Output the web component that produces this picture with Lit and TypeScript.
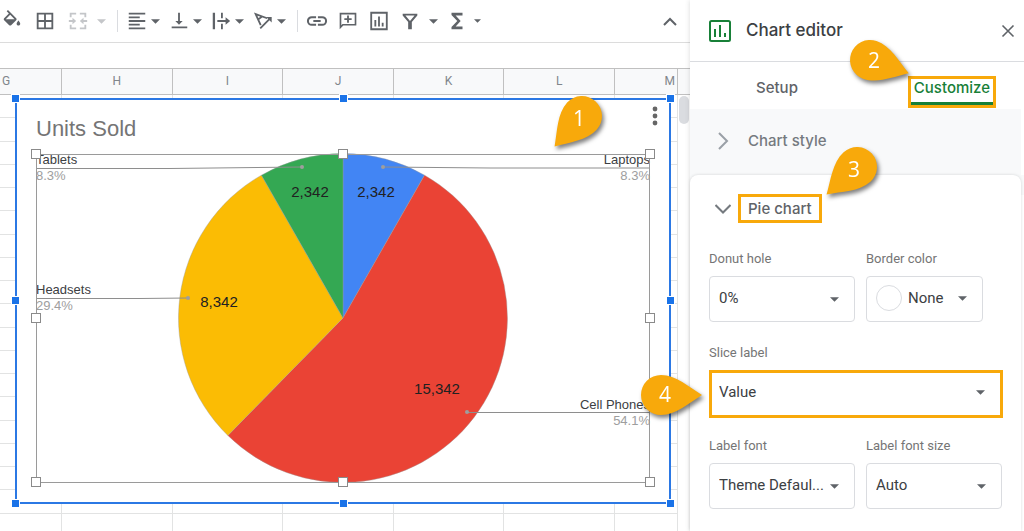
import { LitElement, html, css, svg } from "lit";
import { customElement, property, state } from "lit/decorators.js";
import { classMap } from "lit/directives/class-map.js";

const CARET = svg`<path d="M0 0h10L5 5z" fill="currentColor"/>`;

@customElement("callout-pin")
class CalloutPin extends LitElement {
  @property({ type: Number }) angle = 0;
  @property() label = "";

  static styles = css`
    :host {
      display: block;
      pointer-events: none;
    }
    .pin {
      display: block;
      overflow: visible;
      filter: drop-shadow(2px 3px 2px rgba(0, 0, 0, 0.5));
    }
    .number {
      font: 500 21px "Open Sans", sans-serif;
      fill: #fff;
      text-anchor: middle;
    }
  `;

  render() {
    const rad = (this.angle * Math.PI) / 180;
    return html`<svg class="pin" width="82" height="82" viewBox="-41 -41 82 82">
      <path
        transform="rotate(${this.angle})"
        fill="#f8a90b"
        d="M41 0C28-8 15-20 0-20A20 20 0 0 0 0 20C15 20 28 8 41 0z"
      />
      <text class="number" x=${Math.round(Math.cos(rad) * 4)} y=${Math.round(Math.sin(rad) * 4) + 7}>
        ${this.label}
      </text>
    </svg>`;
  }
}

@customElement("sheet-toolbar")
class SheetToolbar extends LitElement {
  static styles = css`
    :host {
      display: flex;
      align-items: center;
      height: 42px;
      padding: 0 9px 0 1px;
      border-bottom: 1px solid #dcdcdc;
      color: #5f6368;
      background: #fff;
    }
    button {
      display: flex;
      align-items: center;
      justify-content: center;
      flex: none;
      width: 22px;
      height: 28px;
      padding: 0;
      border: 0;
      background: none;
      color: inherit;
    }
    .caret {
      width: 12px;
    }
    .group {
      display: flex;
      gap: 11px;
    }
    .menus {
      gap: 7px;
    }
    .insert {
      gap: 9px;
    }
    .pair {
      display: flex;
      gap: 1px;
    }
    .wide {
      gap: 6px;
    }
    .functions {
      display: flex;
      gap: 3px;
      margin-left: 7px;
    }
    .off {
      color: #c4c6c9;
    }
    .rule {
      width: 1px;
      height: 22px;
      margin: 0 8px 0 10px;
      background: #dadce0;
    }
    .collapse {
      margin-left: auto;
    }
  `;

  tool(name: string, glyph: unknown) {
    return html`<button aria-label=${name}>
      <svg width="22" height="22" viewBox="0 0 24 24" fill="currentColor">${glyph}</svg>
    </button>`;
  }

  caret(name: string, small = false) {
    return html`<button class="caret" aria-label=${name}>
      <svg width=${small ? 7 : 9} height=${small ? 4 : 5} viewBox="0 0 10 5">${CARET}</svg>
    </button>`;
  }

  render() {
    return html`
      <div class="group">
        ${this.tool("Fill color", svg`<path d="M16.56 8.94L7.62 0 6.21 1.41l2.38 2.38-5.15 5.15c-.59.59-.59 1.54 0 2.12l5.5 5.5c.29.29.68.44 1.06.44s.77-.15 1.06-.44l5.5-5.5c.59-.58.59-1.53 0-2.12zM5.21 10L10 5.21 14.79 10zM19 11.5s-2 2.17-2 3.5c0 1.1.9 2 2 2s2-.9 2-2c0-1.33-2-3.5-2-3.5z"/>`)}
        ${this.tool("Borders", svg`<path d="M3 3v18h18V3H3zm8 16H5v-6h6v6zm0-8H5V5h6v6zm8 8h-6v-6h6v6zm0-8h-6V5h6v6z"/>`)}
        <div class="pair wide off">
          ${this.tool("Merge cells", svg`<path d="M3 3h7v2H5v3H3zM14 3h7v5h-2V5h-5zM3 16h2v3h5v2H3zM19 16h2v5h-7v-2h5zM2 11h4V8.500l4 3.500-4 3.500V13H2zM22 11h-4V8.500L14 12l4 3.500V13h4z"/>`)}
          ${this.caret("Merge options")}
        </div>
      </div>
      <span class="rule"></span>
      <div class="group menus">
        <div class="pair">
          ${this.tool("Horizontal align", svg`<path d="M3 3h18v2H3zM3 7h12v2H3zM3 11h18v2H3zM3 15h12v2H3zM3 19h18v2H3z"/>`)}
          ${this.caret("Horizontal align options")}
        </div>
        <div class="pair">
          ${this.tool("Vertical align", svg`<path d="M16 12h-3V3h-2v9H8l4 4zM4 18v2h17v-2z"/>`)}
          ${this.caret("Vertical align options")}
        </div>
        <div class="pair">
          ${this.tool("Text wrapping", svg`<path d="M3 3h2.500v18H3zM12 3h2v6h-2zM12 15h2v6h-2zM8 11h9V8l5 4-5 4v-3H8z"/>`)}
          ${this.caret("Wrapping options")}
        </div>
        <div class="pair">
          ${this.tool("Text rotation", svg`<path d="M9.500 16.500L4 4.500L16.500 9M6.500 10.500L11 7M9 20L19 10" fill="none" stroke="currentColor" stroke-width="2"/><path d="M15.500 7.500H21.500V13.500z"/>`)}
          ${this.caret("Rotation options")}
        </div>
      </div>
      <span class="rule"></span>
      <div class="group insert">
        ${this.tool("Insert link", svg`<path d="M3.200 12c0-1.710 1.390-3.100 3.100-3.100H11V6.700H6.300a5.300 5.300 0 0 0 0 10.600H11v-2.200H6.300A3.100 3.100 0 0 1 3.200 12zM8 13h8v-2H8zm9.700-6.300H13v2.200h4.700a3.100 3.100 0 0 1 0 6.200H13v2.200h4.700a5.300 5.300 0 0 0 0-10.600z"/>`)}
        ${this.tool("Insert comment", svg`<path d="M20.500 3h-17C2.700 3 2.900 3 2.900 4v17l4-4h13.600c.6 0 .6 0 .6-1V4c0-1 0-1-.6-1zM19.300 15.200H6l-1.300 1.300V4.800h14.600zM11 14h2v-3h3V9h-3V6h-2v3H8v2h3z"/>`)}
        ${this.tool("Insert chart", svg`<path d="M2.500 2v20h19V2zm17 18h-15V4h15zM7 11h2v7H7zM11 7h2v11h-2zM15 14h2v4h-2z"/>`)}
        <div class="pair wide">
          ${this.tool("Create a filter", svg`<path d="M4 4h16v2l-6 7v8h-4v-8L4 6zm3 2l5 6 5-6z" fill-rule="evenodd"/>`)}
          ${this.caret("Filter views")}
        </div>
      </div>
      <div class="functions">
        ${this.tool("Functions", svg`<path d="M18 3H6v2.500l6.300 6.500L6 18.500V21h12v-3h-7.500l5.500-6-5.500-6H18z"/>`)}
        ${this.caret("Function list", true)}
      </div>
      <button class="collapse" aria-label="Hide the menus">
        <svg width="14" height="9" viewBox="0 0 14 9"><path d="M1 8l6-6 6 6" fill="none" stroke="currentColor" stroke-width="2"/></svg>
      </button>
    `;
  }
}

interface Slice {
  name: string;
  value: number;
  color: string;
  valueAt: [number, number];
  leader: string;
  dot: [number, number];
  side: "left" | "right";
  labelY: number;
}

const SLICES: Slice[] = [
  { name: "Laptops", value: 2342, color: "#4285f4", valueAt: [376, 197], leader: "M383 167L490 168H650", dot: [383, 167], side: "right", labelY: 164 },
  { name: "Cell Phones", value: 15342, color: "#ea4335", valueAt: [437, 394], leader: "M467 412.500H650", dot: [467, 412], side: "right", labelY: 409 },
  { name: "Headsets", value: 8342, color: "#fbbc04", valueAt: [219, 307], leader: "M36 298.500L140 298.500L188 298", dot: [188, 298], side: "left", labelY: 294 },
  { name: "Tablets", value: 2342, color: "#34a853", valueAt: [310, 197], leader: "M36 168.500H170L302 167", dot: [302, 167], side: "left", labelY: 164 },
];

@customElement("units-chart")
class UnitsChart extends LitElement {
  static styles = css`
    :host {
      display: block;
      font-family: "Liberation Sans", Arial, sans-serif;
    }
    .chart {
      display: block;
      width: 100%;
    }
    .title {
      font-size: 22px;
      fill: #757575;
    }
    .value {
      font-size: 15px;
      fill: #212121;
      text-anchor: middle;
    }
    .name {
      font-size: 13px;
      fill: #3c4043;
    }
    .share {
      font-size: 13px;
      fill: #9e9e9e;
    }
    .right {
      text-anchor: end;
    }
    .leader {
      fill: none;
      stroke: #8e8e8e;
    }
    .dot {
      fill: #9e9e9e;
    }
    .frame {
      fill: #fff;
      stroke: #2b78e4;
      stroke-width: 2;
    }
    .plot {
      fill: none;
      stroke: #9a9a9a;
    }
    .grip {
      fill: #1a73e8;
      stroke: #fff;
    }
    .plot-grip {
      fill: #fff;
      stroke: #8a8a8a;
    }
  `;

  render() {
    const total = SLICES.reduce((sum, s) => sum + s.value, 0);
    const cx = 343;
    const cy = 318;
    const r = 164.5;
    let turn = 0;
    const wedges = SLICES.map((s) => {
      const from = turn * 2 * Math.PI;
      turn += s.value / total;
      const to = turn * 2 * Math.PI;
      const at = (a: number) => `${cx + r * Math.sin(a)} ${cy - r * Math.cos(a)}`;
      return svg`<path fill=${s.color} stroke="#999" stroke-width="0.4"
        d="M${cx} ${cy}L${at(from)}A${r} ${r} 0 ${to - from > Math.PI ? 1 : 0} 1 ${at(to)}z"/>`;
    });
    const grip = (cls: string, half: number) => ([x, y]: number[]) =>
      svg`<rect class=${cls} x=${x - half} y=${y - half} width=${half * 2} height=${half * 2}/>`;

    return html`<svg class="chart" viewBox="8 91 670 420" role="img" aria-label="Units Sold pie chart">
      <rect class="frame" x="16" y="99" width="654" height="404" />
      <text class="title" x="36" y="136">Units Sold</text>
      ${wedges}
      ${SLICES.map((s) => {
        const x = s.side === "left" ? 36 : 650;
        const end = s.side === "right" ? " right" : "";
        return svg`
          <path class="leader" d=${s.leader}/>
          <circle class="dot" cx=${s.dot[0]} cy=${s.dot[1]} r="2"/>
          <text class="value" x=${s.valueAt[0]} y=${s.valueAt[1]}>${s.value.toLocaleString("en-US")}</text>
          <text class=${"name" + end} x=${x} y=${s.labelY}>${s.name}</text>
          <text class=${"share" + end} x=${x} y=${s.labelY + 16}>${((s.value / total) * 100).toFixed(1)}%</text>`;
      })}
      <rect class="plot" x="36.500" y="154.500" width="613" height="328" />
      ${[[36, 154], [343, 154], [650, 154], [36, 318], [650, 318], [36, 482], [343, 482], [650, 482]].map(grip("plot-grip", 4.5))}
      ${[[15, 98], [343, 98], [670, 98], [15, 300], [670, 300], [15, 503], [343, 503], [670, 503]].map(([x, y]) => [x + 0.5, y + 0.5]).map(grip("grip", 4))}
    </svg>`;
  }
}

@customElement("sheet-grid")
class SheetGrid extends LitElement {
  static styles = css`
    :host {
      display: flex;
      flex: 1;
      min-height: 0;
      position: relative;
      overflow: hidden;
      background: #fff;
    }
    .cells {
      flex: 1;
      width: 100%;
      min-width: 0;
      align-self: flex-start;
      table-layout: fixed;
      border-collapse: separate;
      border-spacing: 0;
      font: 12px Roboto, sans-serif;
    }
    .first {
      width: 62px;
    }
    .last {
      width: 63px;
    }
    th {
      box-sizing: border-box;
      height: 27px;
      padding: 0 0 1px;
      border: 1px solid #c0c0c0;
      border-left: 0;
      background: #f8f9fa;
      color: #80868b;
      font-weight: 400;
    }
    th.first {
      padding-left: 2px;
      text-align: left;
    }
    th.last {
      padding-right: 2px;
      text-align: right;
    }
    td {
      box-sizing: border-box;
      height: 23px;
      padding: 0;
      border: solid #e2e3e3;
      border-width: 0 1px 1px 0;
    }
    .tall td {
      height: 24px;
    }
    .scroll {
      flex: none;
      width: 12px;
    }
    .corner {
      box-sizing: border-box;
      height: 27px;
      border: solid #c0c0c0;
      border-width: 1px 0;
      background: #f8f9fa;
    }
    .thumb {
      height: 28px;
      margin: 1px;
      border-radius: 5px;
      background: #dadce0;
    }
    .overlay {
      position: absolute;
      left: 8px;
      right: 12px;
      top: 23px;
    }
    .more {
      position: absolute;
      right: 14px;
      top: 13px;
      width: 18px;
      height: 24px;
      padding: 0;
      border: 0;
      background: none;
      display: flex;
      align-items: center;
      justify-content: center;
    }
    .pin-one {
      position: absolute;
      right: 55px;
      top: -16px;
    }
  `;

  render() {
    const columns = ["G", "H", "I", "J", "K", "L", "M"];
    const edge = (i: number) => classMap({ first: i === 0, last: i === columns.length - 1 });
    return html`
      <table class="cells">
        <thead>
          <tr>${columns.map((c, i) => html`<th class=${edge(i)} scope="col">${c}</th>`)}</tr>
        </thead>
        <tbody>
          ${Array.from({ length: 19 }, (_, row) => html`<tr class=${row % 4 === 1 ? "tall" : ""}>${columns.map(() => html`<td></td>`)}</tr>`)}
        </tbody>
      </table>
      <div class="scroll"><div class="corner"></div><div class="thumb"></div></div>
      <div class="overlay">
        <units-chart></units-chart>
        <button class="more" aria-label="Chart options">
          <svg width="6" height="20" viewBox="0 0 6 20" fill="#666">
            <circle cx="3" cy="3" r="2.400"/><circle cx="3" cy="10" r="2.400"/><circle cx="3" cy="17" r="2.400"/>
          </svg>
        </button>
        <callout-pin class="pin-one" angle="132" label="1"></callout-pin>
      </div>
    `;
  }
}

@customElement("chart-editor")
class ChartEditor extends LitElement {
  @state() private tab = "Customize";

  static styles = css`
    :host {
      display: flex;
      flex-direction: column;
      position: relative;
      background: #fff;
      box-shadow: 0 0 5px rgba(60, 64, 67, 0.2);
      font-family: Roboto, sans-serif;
      color: #3c4043;
    }
    button {
      padding: 0;
      border: 0;
      background: none;
      font-family: inherit;
      color: inherit;
      text-align: left;
    }
    .head {
      display: flex;
      align-items: center;
      gap: 15px;
      height: 61px;
      padding: 0 9px 0 19px;
      border-bottom: 1px solid #dadce0;
    }
    .head h1 {
      margin: 0;
      padding-bottom: 2px;
      font: 500 17px Inter, sans-serif;
      color: #3c4043;
    }
    .close {
      display: flex;
      margin-left: auto;
    }
    .tabs {
      display: flex;
      justify-content: space-between;
      align-items: flex-end;
      height: 46px;
      padding: 0 28px 1px 57px;
    }
    .tab {
      position: relative;
      padding: 3px 3px 0;
      font: 500 15px/18px Inter, sans-serif;
      color: #5f6368;
      border: 3px solid transparent;
      border-top-width: 0;
    }
    .tab span {
      display: block;
      padding: 0 3px 5px;
      border-bottom: 3px solid transparent;
    }
    .tab.current {
      padding: 0;
      border: 3px solid #f8a90b;
      color: #188038;
    }
    .tab.current span {
      border-color: #188038;
    }
    .section {
      display: flex;
      align-items: center;
      height: 66px;
      margin-right: 3px;
      padding: 0 0 2px 25px;
      gap: 17px;
      background: #f8f9fa;
      font: 500 15px/22px Inter, sans-serif;
      color: #757a7f;
    }
    .card {
      flex: 1;
      margin-right: 3px;
      padding: 19px 18px 0 19px;
      border-radius: 8px 8px 0 0;
      background: #fff;
      box-shadow: 0 0 3px rgba(60, 64, 67, 0.2);
    }
    .backdrop {
      display: flex;
      flex: 1;
      flex-direction: column;
      background: linear-gradient(#f8f9fa 20px, #fff 20px);
    }
    .open {
      display: flex;
      align-items: center;
      gap: 7px;
      margin-left: 6px;
      margin-bottom: 28px;
      position: relative;
      font: 500 15px/23px Inter, sans-serif;
      color: #5f6368;
    }
    .open span {
      padding: 0 7px;
      border: 3px solid #f8a90b;
    }
    .fields {
      display: flex;
      flex-direction: column;
      gap: 23px;
    }
    .row {
      display: flex;
      gap: 11px;
    }
    .field {
      display: flex;
      flex-direction: column;
      gap: 9px;
      position: relative;
    }
    .narrow {
      width: 146px;
    }
    .size {
      width: 136px;
    }
    .label {
      font-size: 13px;
      line-height: 16px;
      color: #757575;
    }
    .box {
      display: grid;
      align-items: center;
    }
    .box > * {
      grid-area: 1 / 1;
    }
    .caret {
      justify-self: end;
      margin-right: 16px;
      color: #5f6368;
      pointer-events: none;
    }
    select {
      appearance: none;
      box-sizing: border-box;
      width: 100%;
      height: 46px;
      padding: 0 26px 2px 9px;
      border: 1px solid #dadce0;
      border-radius: 4px;
      background: #fff;
      font: 15px Roboto, sans-serif;
      color: #3c4043;
    }
    .marked {
      margin-bottom: -3px;
    }
    .marked select {
      height: 48px;
      padding: 0 26px 4px 7px;
      border: 3px solid #f8a90b;
      border-radius: 0;
    }
    .marked .caret {
      margin: 0 18px 4px 0;
    }
    .color {
      display: flex;
      align-items: center;
      gap: 6px;
      height: 46px;
      width: 117px;
      box-sizing: border-box;
      padding: 0 15px 2px 9px;
      border: 1px solid #dadce0;
      border-radius: 4px;
      font-size: 15px;
    }
    .color svg {
      margin-left: auto;
    }
    .swatch {
      box-sizing: border-box;
      width: 26px;
      height: 26px;
      border: 1px solid #dadce0;
      border-radius: 50%;
    }
    .pin-two,
    .pin-three,
    .pin-four {
      position: absolute;
      z-index: 2;
    }
    .pin-two {
      left: -82px;
      top: -60px;
    }
    .pin-three {
      left: 101px;
      top: -68px;
    }
    .pin-four {
      left: -89px;
      top: 9px;
    }
  `;

  caret() {
    return html`<svg class="caret" width="9" height="5" viewBox="0 0 10 5">${CARET}</svg>`;
  }

  dropdown(id: string, label: string, value: string, kind: string) {
    return html`<div class="field ${kind}">
      <label class="label" for=${id}>${label}</label>
      <div class="box">
        <select id=${id}><option>${value}</option></select>
        ${this.caret()}
      </div>
      ${kind === "marked" ? html`<callout-pin class="pin-four" angle="0" label="4"></callout-pin>` : ""}
    </div>`;
  }

  render() {
    return html`
      <div class="head">
        <svg width="22" height="22" viewBox="0 0 22 22" fill="#188038">
          <rect x="1" y="1" width="20" height="20" rx="1.500" fill="none" stroke="#188038" stroke-width="2"/>
          <path d="M5 9h2v8H5zM10 5h2v12h-2zM15 13h2v4h-2z"/>
        </svg>
        <h1>Chart editor</h1>
        <button class="close" aria-label="Close">
          <svg width="14" height="14" viewBox="0 0 14 14"><path d="M1.500 1.500l11 11M12.500 1.500l-11 11" stroke="#5f6368" stroke-width="1.600"/></svg>
        </button>
      </div>
      <div class="tabs" role="tablist">
        ${["Setup", "Customize"].map(
          (name) => html`<button
            role="tab"
            aria-selected=${this.tab === name}
            class=${classMap({ tab: true, current: this.tab === name })}
            @click=${() => (this.tab = name)}
          >
            <span>${name}</span>
            ${name === "Customize" ? html`<callout-pin class="pin-two" angle="19" label="2"></callout-pin>` : ""}
          </button>`
        )}
      </div>
      <button class="section" aria-expanded="false">
        <svg width="16" height="18" viewBox="0 0 16 18"><path d="M4 1l8 8-8 8" fill="none" stroke="#9aa0a6" stroke-width="2"/></svg>
        Chart style
      </button>
      <div class="backdrop">
        <div class="card">
          <button class="open" aria-expanded="true">
            <svg width="16" height="10" viewBox="0 0 16 10"><path d="M0.500 1l7.500 7.500L15.500 1" fill="none" stroke="#757a7f" stroke-width="2"/></svg>
            <span>Pie chart</span>
            <callout-pin class="pin-three" angle="138" label="3"></callout-pin>
          </button>
          <div class="fields">
            <div class="row">
              ${this.dropdown("donut", "Donut hole", "0%", "narrow")}
              <div class="field">
                <label class="label" for="border">Border color</label>
                <button class="color" id="border"><i class="swatch"></i>None${this.caretInline()}</button>
              </div>
            </div>
            ${this.dropdown("slice", "Slice label", "Value", "marked")}
            <div class="row">
              ${this.dropdown("font", "Label font", "Theme Defaul...", "narrow")}
              ${this.dropdown("size", "Label font size", "Auto", "size")}
            </div>
          </div>
        </div>
      </div>
    `;
  }

  caretInline() {
    return html`<svg width="9" height="5" viewBox="0 0 10 5" color="#5f6368">${CARET}</svg>`;
  }
}

@customElement("app-root")
class AppRoot extends LitElement {
  static styles = css`
    :host {
      display: flex;
      height: 100vh;
      overflow: hidden;
      background: #fff;
    }
    .sheet {
      display: flex;
      flex: 1;
      flex-direction: column;
      min-width: 0;
    }
    .formula {
      height: 25px;
      background: #fff;
    }
    .editor {
      flex: none;
      width: 334px;
    }
  `;

  render() {
    return html`
      <main class="sheet">
        <sheet-toolbar></sheet-toolbar>
        <div class="formula"></div>
        <sheet-grid></sheet-grid>
      </main>
      <chart-editor class="editor"></chart-editor>
    `;
  }
}
